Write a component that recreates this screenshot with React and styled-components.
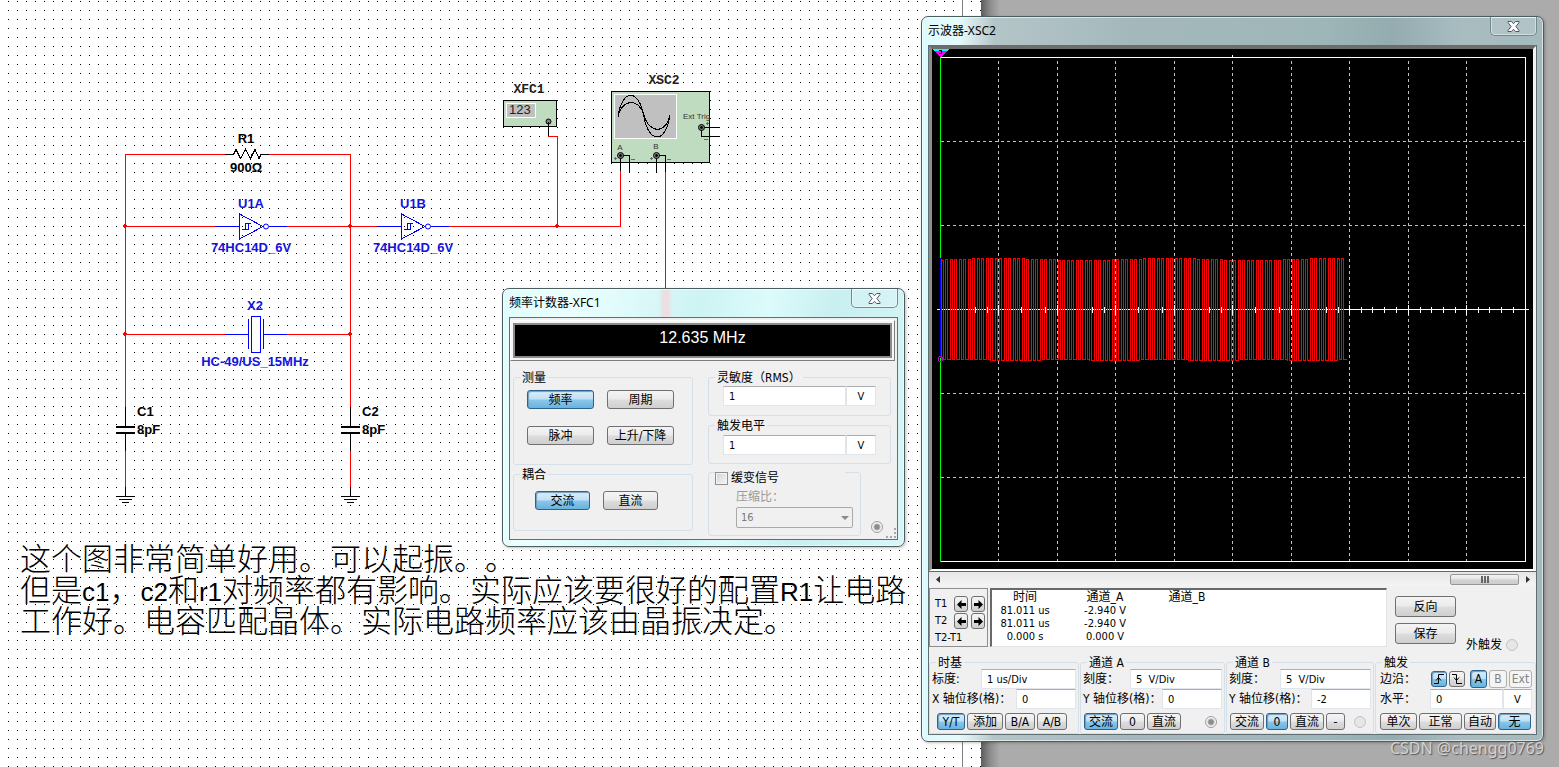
import React from 'react';
import styled, { createGlobalStyle, css } from 'styled-components';

const GlobalStyle = createGlobalStyle`
  * { box-sizing: border-box; }
  body {
    margin: 0;
    background: #ababab;
    color: #000;
    font: 12px/16px "DejaVu Sans Condensed", "Noto Sans", "Noto Sans CJK SC", sans-serif;
  }
`;

const Desktop = styled.main`
  position: relative;
  display: flex;
  min-height: 100vh;
  overflow: hidden;
`;

const Sheet = styled.section`
  flex: 0 0 981px;
  background: #fff;
`;

const Backdrop = styled.div`
  flex: 1;
  background: linear-gradient(to right, #5c5c5c, #8c8c8c 9px, #ababab 19px);
`;

const Schematic = styled.svg`
  display: block;
  width: 100%;
  height: 100%;
  shape-rendering: crispEdges;
  fill: none;
  circle { shape-rendering: geometricPrecision; }
  text { stroke: none; font: bold 13px "Liberation Sans", sans-serif; }
  .mono { font: bold 13px "Liberation Mono", monospace; }
  .tiny { font: 8px "Liberation Sans", sans-serif; }
  .meter { font: 13px "Liberation Sans", sans-serif; }
`;

const Note = styled.p`
  position: absolute;
  left: 20px;
  top: 541px;
  margin: 0;
  white-space: nowrap;
  font: 300 31px/31px "Noto Sans CJK SC", sans-serif;
  text-spacing-trim: space-all;
`;

const Latin = styled.span`
  font: 26px/1px "Liberation Sans", sans-serif;
`;

const Window = styled.section`
  position: absolute;
  left: ${p => p.$x}px;
  top: ${p => p.$y}px;
  width: ${p => p.$width}px;
  padding: 0 6px 6px;
  border: 1px solid #4c5d60;
  border-radius: 7px;
  background: ${p => p.$glass};
  box-shadow: inset 0 0 0 1px rgba(255, 255, 255, 0.6), 1px 1px 3px rgba(0, 0, 0, 0.25);
`;

const TitleBar = styled.header`
  display: flex;
  justify-content: space-between;
  align-items: flex-start;
  height: 28px;
`;

const Title = styled.h1`
  margin: 0;
  font: 12px/27px "Noto Sans", "Noto Sans CJK SC", sans-serif;
`;

const CloseButton = styled.button`
  display: flex;
  justify-content: center;
  align-items: center;
  width: 47px;
  height: 19px;
  padding: 0;
  border: 1px solid #74898e;
  border-top: 0;
  border-radius: 0 0 5px 5px;
  background: rgba(255, 255, 255, 0.12);
  box-shadow: inset 0 0 0 1px rgba(255, 255, 255, 0.45);
`;

const Client = styled.div`
  border: 1px solid #5f6f72;
  background: #f0f0f0;
`;

const pressed = css`
  border-color: #2c628b;
  background: linear-gradient(#dceefa, #bfe0f4 48%, #8cc6e9 52%, #68b3dd);
  box-shadow: inset 1px 1px 1px #6f9cba;
`;

const PushButton = styled.button`
  display: flex;
  flex: none;
  justify-content: center;
  align-items: center;
  width: ${p => p.$width}px;
  height: ${p => p.$height || 19}px;
  padding: 0;
  border: 1px solid #707070;
  border-radius: 3px;
  background: linear-gradient(#f4f4f4, #ebebeb 48%, #dddddd 52%, #cfcfcf);
  color: #000;
  font: inherit;
  line-height: 14px;
  white-space: nowrap;
  ${p => p.$on && pressed}
  &:disabled { border-color: #b0b0b0; background: #f4f4f4; color: #838383; }
`;

const TextBox = styled.input`
  flex: none;
  width: ${p => p.$width}px;
  height: 20px;
  margin: 0;
  padding: 0 5px;
  border: 1px solid #e0e5ec;
  border-top-color: #abadb3;
  border-radius: 1px;
  background: #fff;
  color: #000;
  font: inherit;
  font-size: 11px;
  text-align: ${p => (p.$unit ? 'center' : 'left')};
`;

const Group = styled.fieldset`
  min-width: 0;
  height: ${p => p.$height}px;
  margin: 0;
  padding: 0;
  border: 1px solid #d5dfe8;
  border-radius: 3px;
`;

const Legend = styled.legend`
  margin: 0 0 -2px 6px;
  padding: 2px 2px 0;
  line-height: 16px;
  white-space: nowrap;
`;

/* the tick box hangs below the frame's top edge */
const CheckGroup = styled(Group)`
  margin: -6px 30px 0 0;
`;

const CheckLegend = styled(Legend)`
  width: 130px;
  margin-bottom: 0;
  padding: 12px 0 0;
`;

const Lamp = styled.input`
  appearance: none;
  flex: none;
  width: 12px;
  height: 12px;
  margin: 0;
  border: 1px solid #9d9d9d;
  border-radius: 50%;
  background: #f4f4f4;
  &:checked { background: radial-gradient(#8c8c8c 0 2px, #b5b5b5 3px, #f4f4f4 4px); }
  &:disabled { border-color: #c4c4c4; background: #e6e6e6; }
`;

/* frequency counter */

const Display = styled.output`
  display: block;
  margin: 2px 2px 0 0;
  border: 1px solid #7d7d7d;
  border-left-color: #fff;
  border-top-color: #fff;
  padding: 2px;
  background: #f6f6f6;
`;

const Reading = styled.span`
  display: block;
  height: 35px;
  border: 2px solid #8b8b8b;
  background: #000;
  color: #fff;
  font: 16px/26px "Liberation Sans", sans-serif;
  text-align: center;
`;

const CounterPanels = styled.div`
  display: grid;
  grid-template-columns: 180fr 183fr;
  column-gap: 15px;
  padding: 7px 6px 0 3px;
`;

const Column = styled.div`
  display: flex;
  flex-direction: column;
`;

const ButtonGrid = styled.div`
  display: grid;
  grid-template-columns: max-content max-content;
  gap: 17px 13px;
  padding: ${p => p.$top}px 0 0 ${p => p.$left}px;
`;

const LevelRow = styled.div`
  display: flex;
  padding: ${p => p.$top}px 0 0 14px;
`;

const CheckLabel = styled.label`
  display: flex;
  align-items: center;
  gap: 3px;
`;

const CheckBox = styled.input`
  appearance: none;
  width: 13px;
  height: 13px;
  margin: 0;
  border: 1px solid #8e8f8f;
  background: linear-gradient(135deg, #cfd3d6, #f6f6f6);
  box-shadow: inset 0 0 0 1px #f4f4f4;
`;

const RatioField = styled.label`
  display: flex;
  flex-direction: column;
  width: 117px;
  margin: 3px 0 0 27px;
  color: #9a9a9a;
`;

const SelectBox = styled.span`
  position: relative;
  display: block;
  margin-top: 2px;
  &::after {
    content: '';
    position: absolute;
    right: 4px;
    top: 9px;
    border: 4px solid transparent;
    border-top-color: #8a8a8a;
    border-bottom: 0;
  }
`;

const Select = styled.select`
  appearance: none;
  display: block;
  width: 100%;
  height: 21px;
  padding: 0 4px;
  border: 1px solid #a9a9a9;
  border-radius: 2px;
  background: #f0f0f0;
  color: #7a7a7a;
  font: inherit;
  font-size: 11px;
  opacity: 1;
`;

const CounterFoot = styled.div`
  display: flex;
  justify-content: flex-end;
  gap: 3px;
  height: 18px;
  margin-top: -15px;
  padding: 0 1px 1px 0;
`;

const Grip = styled.svg`
  display: block;
  align-self: flex-end;
  width: 10px;
  height: 10px;
  fill: #a6a6a6;
`;

/* oscilloscope */

const Screen = styled.div`
  border: 3px solid #8e8e8e;
  border-top-color: #6e6e6e;
  border-right-color: #f4f4f4;
  border-bottom: 2px solid #fff;
  background: #000;
`;

const Trace = styled.svg`
  display: block;
  width: 100%;
  height: 520px;
  shape-rendering: crispEdges;
  fill: none;
`;

const ScrollBar = styled.div`
  display: flex;
  align-items: center;
  height: 15px;
  border-top: 1px solid #666;
  background: linear-gradient(#e6e6e6, #f4f4f4);
`;

const ScrollArrow = styled.button`
  display: flex;
  align-items: center;
  justify-content: center;
  width: 17px;
  height: 14px;
  padding: 0;
  border: 0;
  background: none;
`;

const Track = styled.div`
  display: flex;
  flex: 1;
  justify-content: flex-end;
`;

const Thumb = styled.div`
  display: flex;
  justify-content: center;
  gap: 1px;
  width: 69px;
  height: 11px;
  border: 1px solid #959595;
  border-radius: 2px;
  background: linear-gradient(#f3f3f3, #e4e4e4 48%, #d3d3d3 52%, #cdcdcd);
  i { width: 2px; height: 7px; margin-top: 1px; border: solid #666; border-width: 0 1px; }
`;

const ReadoutRow = styled.div`
  display: flex;
  height: 59px;
  margin-top: 2px;
`;

const CursorPanel = styled.div`
  display: grid;
  grid-template-columns: 16px 14px 14px;
  grid-template-rows: 16px 16px 16px;
  gap: 1px 3px;
  width: 59px;
  padding: 7px 0 0 5px;
  border: 1px solid #8e8e8e;
  font-size: 11px;
  white-space: nowrap;
`;

const Readout = styled.div`
  flex: 0 0 397px;
  margin-left: 2px;
  border: 1px solid #e3e3e3;
  border-top: 2px solid #696969;
  border-left: 2px solid #696969;
  background: #fff;
`;

const ReadoutTable = styled.table`
  table-layout: fixed;
  width: 230px;
  border-collapse: collapse;
  font-size: 11px;
  th { padding: 0; height: 14px; font-size: 12px; font-weight: normal; line-height: 14px; }
  td { padding: 0; height: 13px; line-height: 13px; text-align: center; }
`;

const Actions = styled.div`
  display: flex;
  flex-direction: column;
  gap: 6px;
  padding: 8px 0 0 8px;
`;

const ExternalLamp = styled.label`
  display: flex;
  align-items: center;
  align-self: flex-end;
  gap: 4px;
  margin: 0 0 -6px 10px;
`;

const Controls = styled.div`
  display: grid;
  grid-template-columns: 150fr 145fr 148fr 161fr;
  column-gap: 1px;
  margin-top: 6px;
`;

const FieldRow = styled.div`
  display: flex;
  justify-content: space-between;
  align-items: center;
  height: 20px;
  padding: 0 ${p => (p.$wide ? 3 : 2)}px 0 ${p => (p.$wide ? 4 : 2)}px;
  white-space: nowrap;
`;

const Cluster = styled.div`
  display: flex;
  align-items: center;
  gap: ${p => p.$gap || 0}px;
`;

const ButtonRow = styled.div`
  display: flex;
  align-items: center;
  gap: 2px;
  padding: 4px 7px 0 ${p => p.$left}px;
  ${Lamp} { margin-left: auto; }
`;

const Watermark = styled.span`
  position: absolute;
  right: 15px;
  bottom: 8px;
  color: #d2d2d2;
  font: 16px/22px "Noto Sans", sans-serif;
  text-shadow: 1px 1px 1px #555;
`;

const CloseIcon = () => (
  <svg width="13" height="11" viewBox="0 0 13 11">
    <path d="M1 .5h3.4l2.1 2.2L8.600.5H12v1L8.900 5.500 12 9.500v1H8.600L6.500 8.300 4.400 10.500H1v-1L4.100 5.500 1 1.500z" fill="#fff" stroke="#4b5466" />
  </svg>
);

const CornerGrip = () => (
  <Grip viewBox="0 0 10 10">
    <path d="M8 0h2v2h-2zM8 4h2v2h-2zM8 8h2v2h-2zM4 8h2v2h-2zM0 8h2v2h-2z" />
  </Grip>
);

const Arrow = ({ back }) => (
  <svg width="9" height="9" viewBox="0 0 9 9">
    <path d={back ? 'M0 4.500 4.500 0V3H9V6H4.500V9z' : 'M9 4.500 4.500 0V3H0V6H4.500V9z'} fill="#000" />
  </svg>
);

const EdgeIcon = ({ falling }) => (
  <svg width="12" height="12" viewBox="0 0 12 12" fill="none" stroke="#000">
    {falling ? <path d="M1 1.500H5.500V10.500H11M3 4.500 5.500 7.500 8 4.500" /> : <path d="M1 10.500H5.500V1.500H11M3 7.500 5.500 4.500 8 7.500" />}
  </svg>
);

const Inverter = ({ x, name }) => (
  <g transform={`translate(${x} 0)`} stroke="#00f">
    <path d="M-24 226.500H0M30 226.500H48M0.500 214V239L24 226.500zM3 229.500H9.500V223.500M6.500 229.500V223.500H12" />
    <circle cx="27" cy="226.500" r="2.500" />
    <text x="12" y="208" textAnchor="middle" fill="#1414e0">{name}</text>
    <text x="12" y="252" textAnchor="middle" fill="#1414e0">74HC14D_6V</text>
  </g>
);

const Capacitor = ({ x, name }) => (
  <g transform={`translate(${x} 0)`} stroke="#000">
    <path d="M.5 407V426M.5 433V451M.5 487V496M-9 496.500H10M-6 499.500H7M-3 502.500H4" />
    <path d="M-9 427H10M-9 433H10" strokeWidth="2" />
    <path d="M.5 451V487" stroke="#f00" />
    <text x="12" y="416" fill="#000">{name}</text>
    <text x="12" y="434" fill="#000">8pF</text>
  </g>
);

const Terminal = ({ x, y }) => (
  <g stroke="#000">
    <circle cx={x + 0.5} cy={y + 0.5} r="3" fill="#808080" />
    <circle cx={x + 0.5} cy={y + 0.5} r="1" fill="#000" />
  </g>
);

const junctions = [[125, 226], [350, 226], [125, 334], [350, 334], [557, 226]];

const Circuit = () => (
  <Schematic>
    <defs>
      <pattern id="dots" x="8" y="1" width="9" height="9" patternUnits="userSpaceOnUse">
        <rect width="1" height="1" fill="#000" />
      </pattern>
    </defs>
    <rect width="100%" height="100%" fill="url(#dots)" />
    <path d="M962.500 0V2000" stroke="#808080" />
    <path
      d="M225 154.500H125.500V407M269 154.500H350.500V407M125 226.500H215M287 226.500H377M449 226.500H620.500V171M125 334.500H225M287 334.500H350M557.500 226V136.500H548M665.500 172V300"
      stroke="#f00"
    />
    {junctions.map(([x, y]) => (
      <path key={`${x}-${y}`} d={`M${x - 1} ${y - 2}h2v1h1v2h-1v1h-2v-1h-1v-2h1z`} fill="#f00" />
    ))}
    <path d="M225 154.500H233.500L236 149.500 240.500 158.500 245.500 149.500 250.500 158.500 255 149.500 259 158.500 261 154.500H269" stroke="#000" />
    <text x="246" y="143" textAnchor="middle" fill="#000">R1</text>
    <text x="246" y="172" textAnchor="middle" fill="#000">900Ω</text>
    <Inverter x={239} name="U1A" />
    <Inverter x={401} name="U1B" />
    <g stroke="#00f">
      <path d="M225 334.500H248M263 334.500H287M248.500 319V349M263.500 319V349M251.500 316.500H260.500V352.500H251.500z" />
      <text x="255" y="310" textAnchor="middle" fill="#1414e0">X2</text>
      <text x="255" y="366" textAnchor="middle" fill="#1414e0">HC-49/US_15MHz</text>
    </g>
    <Capacitor x={125} name="C1" />
    <Capacitor x={350} name="C2" />

    <text className="mono" x="529" y="93" textAnchor="middle" fill="#222">XFC1</text>
    <path d="M503.500 100.500H556.500V126.500H503.500z" fill="#c0dcc0" stroke="#000" />
    <path d="M506.500 103.500H535.500V117.500H506.500z" fill="#c0c0c0" stroke="#fff" />
    <text className="meter" x="509" y="114" fill="#222">123</text>
    <circle cx="548.500" cy="121.500" r="2.500" fill="#808080" stroke="#000" />
    <path d="M548.500 122V136" stroke="#000" />

    <text className="mono" x="664" y="84" textAnchor="middle" fill="#222">XSC2</text>
    <path d="M611.500 91.500H709.500V162.500H611.500z" fill="#c0dcc0" stroke="#000" />
    <path d="M614.500 94.500H676.500V138.500H614.500z" fill="#c0c0c0" stroke="#fff" />
    <path d="M618 117C622 88 639 88 644 117C649 144 666 144 670 115M618 117C622 98 639 98 644 115C649 134 666 134 670 115" stroke="#000" />
    <g fill="#333">
      <text className="tiny" x="620" y="150" textAnchor="middle">A</text>
      <text className="tiny" x="656" y="149" textAnchor="middle">B</text>
      <text className="tiny" x="683" y="119">Ext Trig</text>
    </g>
    <path d="M631 159.500H635M667 159.500H671M704 139.500H708M706 123.500H709M707.500 122V125M614 158.500H617M615.500 157V160M650 158.500H653M651.500 157V160" stroke="#667" />
    <path d="M620.500 155V171M620 155.500H629.500V173M656.500 155V173M656 155.500H665.500V172M701 127.500H720M701.500 127V136.500H720" stroke="#000" />
    <Terminal x={620} y={155} />
    <Terminal x={656} y={155} />
    <Terminal x={701} y={127} />
  </Schematic>
);

const columns = [998, 1057, 1115, 1174, 1232, 1291, 1349, 1408, 1466];
const rows = [141, 225, 393, 477];

const wave = (() => {
  let d = 'M941 358.500V258.500';
  for (let k = 0; k < 90; k += 1) {
    const x = 941 + Math.floor(k * 4.5) + 0.5;
    const next = 941 + Math.floor((k + 1) * 4.5) + 0.5;
    const top = 259 + Math.round(Math.sin(k / 6 + 2.6)) + 0.5;
    const bottom = 359 + (Math.floor(k / 11) % 2) + 0.5;
    d += `M${x} ${bottom}V${top}H${x + 2}V${bottom}H${next}`;
  }
  return d;
})();

const ticks = columns
  .concat(940)
  .flatMap(x => [12, 23, 35, 47].map(step => x + step))
  .map(x => `M${x}.5 307V313`)
  .join('');

const ScopeTrace = () => (
  <Trace viewBox="932 49 601 520" preserveAspectRatio="none">
    <path d={columns.map(x => `M${x}.5 61V561`).join('')} stroke="#c0c0c0" strokeDasharray="3 3" />
    <path d={rows.map(y => `M941 ${y}.5H1525`).join('')} stroke="#c0c0c0" strokeDasharray="3 3" />
    <path d="M940 57.500H1525.500V561.500H940M937 309.500H1529" stroke="#fff" />
    <path d={ticks} stroke="#fff" />
    <path d={columns.map(x => `M${x}.5 305V315`).join('')} stroke="#fff" />
    <path d={wave} stroke="#f00" />
    <path d="M1232.500 55V57" stroke="#fff" />
    <path d="M940.500 57V562" stroke="#0f0" />
    <path d="M940.500 258V358" stroke="#00f" />
    <path d="M932 49H949L946 52H935z" fill="#0ff" />
    <path d="M934 51H947L941 57H940z" fill="#f0f" />
    <path d="M939 50.500H942M941.500 51V53M939 53.500H942" stroke="#000" />
    <circle cx="940.500" cy="359" r="2.500" stroke="#c0c" />
  </Trace>
);

const Counter = () => (
  <Window
    $x={502}
    $y={288}
    $width={403}
    $glass="linear-gradient(to right, transparent 156px, #eadfe2 160px, #eadfe2 165px, transparent 170px) 0 0 / 100% 28px no-repeat, linear-gradient(100deg, #dffcfc 0, #ecffff 16%, #cdf3f3 45%, #dcfbfb 60%, #c9eff0 75%, #d8f6f7)"
  >
    <TitleBar>
      <Title>频率计数器-XFC1</Title>
      <CloseButton aria-label="关闭"><CloseIcon /></CloseButton>
    </TitleBar>
    <Client>
      <Display><Reading>12.635 MHz</Reading></Display>
      <CounterPanels>
        <Column>
          <Group $height={97}>
            <Legend>测量</Legend>
            <ButtonGrid $top={6} $left={13}>
              <PushButton $width={67} $on>频率</PushButton>
              <PushButton $width={67}>周期</PushButton>
              <PushButton $width={67}>脉冲</PushButton>
              <PushButton $width={67}>上升/下降</PushButton>
            </ButtonGrid>
          </Group>
          <Group $height={66}>
            <Legend>耦合</Legend>
            <ButtonGrid $top={10} $left={21}>
              <PushButton $width={55} $on>交流</PushButton>
              <PushButton $width={55}>直流</PushButton>
            </ButtonGrid>
          </Group>
        </Column>
        <Column>
          <Group $height={48}>
            <Legend>灵敏度（RMS）</Legend>
            <LevelRow $top={2}>
              <TextBox $width={123} aria-label="灵敏度" defaultValue="1" />
              <TextBox $width={30} $unit aria-label="灵敏度单位" defaultValue="V" />
            </LevelRow>
          </Group>
          <Group $height={48}>
            <Legend>触发电平</Legend>
            <LevelRow $top={3}>
              <TextBox $width={123} aria-label="触发电平" defaultValue="1" />
              <TextBox $width={30} $unit aria-label="触发电平单位" defaultValue="V" />
            </LevelRow>
          </Group>
          <CheckGroup $height={78}>
            <CheckLegend>
              <CheckLabel><CheckBox type="checkbox" />缓变信号</CheckLabel>
            </CheckLegend>
            <RatioField>
              压缩比：
              <SelectBox>
                <Select disabled defaultValue="16"><option>16</option></Select>
              </SelectBox>
            </RatioField>
          </CheckGroup>
        </Column>
      </CounterPanels>
      <CounterFoot>
        <Lamp type="radio" defaultChecked aria-label="运行" />
        <CornerGrip />
      </CounterFoot>
    </Client>
  </Window>
);

const Channel = ({ id, offset, scaleWidth, zeroWidth, children, on, active }) => (
  <Group $height={81}>
    <Legend>通道 {id}</Legend>
    <FieldRow>
      <label htmlFor={`scale${id}`}>刻度：</label>
      <TextBox id={`scale${id}`} $width={scaleWidth} defaultValue="5  V/Div" />
    </FieldRow>
    <FieldRow>
      <label htmlFor={`offset${id}`}>Y 轴位移(格)：</label>
      <TextBox id={`offset${id}`} $width={60} defaultValue={offset} />
    </FieldRow>
    <ButtonRow $left={3}>
      <PushButton $width={34} $height={17} $on={on === 'ac'}>交流</PushButton>
      <PushButton $width={zeroWidth} $height={17} $on={on === 'zero'}>0</PushButton>
      <PushButton $width={34} $height={17}>直流</PushButton>
      {children}
      <Lamp type="radio" defaultChecked={active} disabled={!active} aria-label={`通道 ${id}`} />
    </ButtonRow>
  </Group>
);

const Scope = () => (
  <Window
    $x={921}
    $y={16}
    $width={623}
    $glass="linear-gradient(to right, #dcfafa 0, #e6fbfc 36px, #cfdfe1 56px, #b4c5c8 72px, #a4b8bb 210px, #9fb6b9 400px, #94abaf 470px, #a9bdc1 540px, #a5babd)"
  >
    <TitleBar>
      <Title>示波器-XSC2</Title>
      <CloseButton aria-label="关闭"><CloseIcon /></CloseButton>
    </TitleBar>
    <Client>
      <Screen><ScopeTrace /></Screen>
      <ScrollBar>
        <ScrollArrow aria-label="向左">
          <svg width="4" height="7" viewBox="0 0 4 7"><path d="M4 0V7L0 3.500z" fill="#333" /></svg>
        </ScrollArrow>
        <Track><Thumb><i /><i /><i /></Thumb></Track>
        <ScrollArrow aria-label="向右">
          <svg width="4" height="7" viewBox="0 0 4 7"><path d="M0 0V7L4 3.500z" fill="#333" /></svg>
        </ScrollArrow>
      </ScrollBar>
      <ReadoutRow>
        <CursorPanel>
          <span>T1</span>
          <PushButton $width={14} $height={16} aria-label="T1 左移"><Arrow back /></PushButton>
          <PushButton $width={14} $height={16} aria-label="T1 右移"><Arrow /></PushButton>
          <span>T2</span>
          <PushButton $width={14} $height={16} aria-label="T2 左移"><Arrow back /></PushButton>
          <PushButton $width={14} $height={16} aria-label="T2 右移"><Arrow /></PushButton>
          <span>T2-T1</span>
        </CursorPanel>
        <Readout>
          <ReadoutTable>
            <colgroup><col width="66" /><col width="94" /><col width="70" /></colgroup>
            <thead><tr><th>时间</th><th>通道_A</th><th>通道_B</th></tr></thead>
            <tbody>
              <tr><td>81.011 us</td><td>-2.940 V</td><td /></tr>
              <tr><td>81.011 us</td><td>-2.940 V</td><td /></tr>
              <tr><td>0.000 s</td><td>0.000 V</td><td /></tr>
            </tbody>
          </ReadoutTable>
        </Readout>
        <Actions>
          <PushButton $width={61} $height={21}>反向</PushButton>
          <PushButton $width={61} $height={21}>保存</PushButton>
        </Actions>
        <ExternalLamp>外触发<Lamp type="radio" disabled /></ExternalLamp>
      </ReadoutRow>
      <Controls>
        <Group $height={81}>
          <Legend>时基</Legend>
          <FieldRow>
            <label htmlFor="timebase">标度:</label>
            <TextBox id="timebase" $width={95} defaultValue="1 us/Div" />
          </FieldRow>
          <FieldRow>
            <label htmlFor="xoffset">X 轴位移(格)：</label>
            <TextBox id="xoffset" $width={60} defaultValue="0" />
          </FieldRow>
          <ButtonRow $left={7}>
            <PushButton $width={28} $height={17} $on>Y/T</PushButton>
            <PushButton $width={36} $height={17}>添加</PushButton>
            <PushButton $width={30} $height={17}>B/A</PushButton>
            <PushButton $width={30} $height={17}>A/B</PushButton>
          </ButtonRow>
        </Group>
        <Channel id="A" offset="0" scaleWidth={92} zeroWidth={25} on="ac" active />
        <Channel id="B" offset="-2" scaleWidth={91} zeroWidth={22} on="zero">
          <PushButton $width={19} $height={17}>-</PushButton>
        </Channel>
        <Group $height={81}>
          <Legend>触发</Legend>
          <FieldRow $wide>
            <span>边沿：</span>
            <Cluster $gap={5}>
              <Cluster $gap={2}>
                <PushButton $width={16} $height={16} $on aria-label="上升沿"><EdgeIcon /></PushButton>
                <PushButton $width={16} $height={16} aria-label="下降沿"><EdgeIcon falling /></PushButton>
              </Cluster>
              <Cluster $gap={2}>
                <PushButton $width={17} $height={18} $on>A</PushButton>
                <PushButton $width={18} $height={18} disabled>B</PushButton>
                <PushButton $width={23} $height={18} disabled>Ext</PushButton>
              </Cluster>
            </Cluster>
          </FieldRow>
          <FieldRow $wide>
            <label htmlFor="level">水平：</label>
            <Cluster>
              <TextBox id="level" $width={73} defaultValue="0" />
              <TextBox $width={29} $unit aria-label="水平单位" defaultValue="V" />
            </Cluster>
          </FieldRow>
          <ButtonRow $left={4}>
            <PushButton $width={37} $height={17}>单次</PushButton>
            <PushButton $width={43} $height={17}>正常</PushButton>
            <PushButton $width={32} $height={17}>自动</PushButton>
            <PushButton $width={33} $height={17} $on>无</PushButton>
          </ButtonRow>
        </Group>
      </Controls>
    </Client>
  </Window>
);

export default function App() {
  return (
    <>
      <GlobalStyle />
      <Desktop>
        <Sheet><Circuit /></Sheet>
        <Backdrop />
        <Note>
          这个图非常简单好用。可以起振。。<br />
          但是<Latin>c1</Latin>，<Latin>c2</Latin>和<Latin>r1</Latin>对频率都有影响。实际应该要很好的配置<Latin>R1</Latin>让电路<br />
          工作好。电容匹配晶体。实际电路频率应该由晶振决定。
        </Note>
        <Counter />
        <Scope />
        <Watermark>CSDN @chengg0769</Watermark>
      </Desktop>
    </>
  );
}
